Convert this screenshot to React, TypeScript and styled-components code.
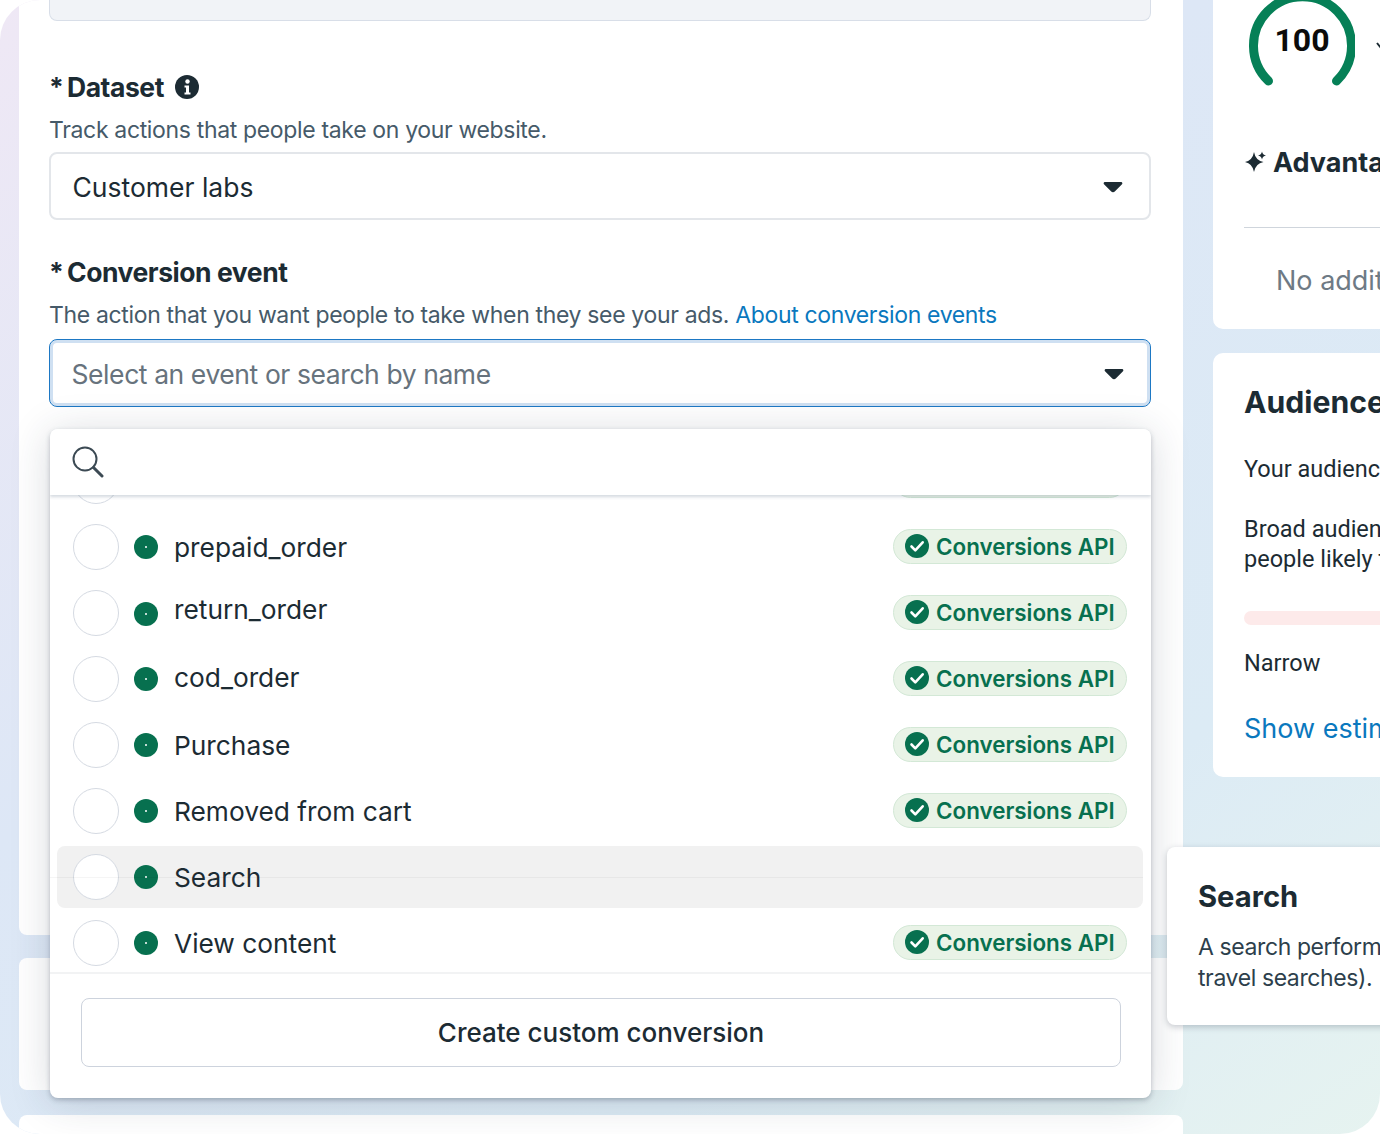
import React from 'react';
import styled, { createGlobalStyle } from 'styled-components';

const GlobalStyle = createGlobalStyle`
    html, body {
        margin: 0;
        padding: 0;
        background: #ffffff;
    }
    body {
        font-family: Inter, "Noto Sans", "Liberation Sans", sans-serif;
        color: #1c2b33;
    }
`;

const Frame = styled.div`
    position: relative;
    display: flex;
    gap: 30px;
    width: 1380px;
    height: 1134px;
    padding-left: 19px;
    box-sizing: border-box;
    overflow: hidden;
    border-radius: 40px 0 40px 40px;
    background: linear-gradient(145deg, #efe8f5 0%, #dde7f6 40%, #dcebf5 75%, #e6f3f0 100%);
`;

const LeftColumn = styled.div`
    flex: 0 0 1164px;
    display: flex;
    flex-direction: column;
`;

const RightColumn = styled.div`
    flex: 1;
    display: flex;
    flex-direction: column;
    gap: 24px;
    min-width: 0;
`;

const Panel = styled.section<{ $height: number; $gap?: number }>`
    flex: 0 0 ${(p) => p.$height}px;
    margin-bottom: ${(p) => p.$gap || 0}px;
    box-sizing: border-box;
    background: #ffffff;
    border-radius: 0 0 8px 8px;
    padding: 0 30px;
`;

const BottomPanel = styled(Panel)`
    border-radius: 8px;
`;

const TopField = styled.div`
    width: 1102px;
    height: 21px;
    box-sizing: border-box;
    background: #f1f3f7;
    border: 1.5px solid #d8dee8;
    border-top: 0;
    border-radius: 0 0 8px 8px;
`;

const FieldLabel = styled.h3<{ $top: number }>`
    display: flex;
    align-items: center;
    margin: ${(p) => p.$top}px 0 0;
    height: 36px;
    font-size: 26.5px;
    font-weight: 700;
    letter-spacing: -0.45px;
    color: #1c2b33;
`;

const Asterisk = styled.span`
    flex: 0 0 18px;
`;

const LabelIcon = styled.span`
    display: flex;
    margin-left: 11px;
`;

const Hint = styled.p<{ $after: number }>`
    margin: 10px 0 ${(p) => p.$after}px;
    height: 30px;
    line-height: 30px;
    font-size: 23px;
    letter-spacing: -0.34px;
    color: #465a69;
    white-space: nowrap;
`;

const BlueLink = styled.a`
    color: #0a78be;
`;

const Select = styled.div<{ $focused?: boolean }>`
    display: flex;
    align-items: center;
    justify-content: space-between;
    width: 1102px;
    height: 68px;
    box-sizing: border-box;
    padding: 2px 26px 0 21.500px;
    border-radius: 8px;
    font-size: 26.5px;
    letter-spacing: ${(p) => (p.$focused ? '-0.42px' : '0')};
    background: #ffffff;
    border: ${(p) => (p.$focused ? '1.5px solid #1d78c4' : '2px solid #e3e6ea')};
    box-shadow: ${(p) => (p.$focused ? 'inset 0 0 0 3px #cfe0f2' : 'none')};
    color: ${(p) => (p.$focused ? '#67737d' : '#1c2b33')};
`;

const Dropdown = styled.div`
    position: absolute;
    left: 50px;
    top: 429px;
    width: 1101px;
    height: 669px;
    display: flex;
    flex-direction: column;
    background: #ffffff;
    border-radius: 8px;
    overflow: hidden;
    box-shadow: 0 2px 5px rgba(40, 50, 70, 0.28);
`;

const DropdownGlow = styled.div`
    position: absolute;
    left: 50px;
    top: 429px;
    width: 1101px;
    height: 669px;
    border-radius: 8px;
    box-shadow: 0 4px 40px rgba(40, 50, 70, 0.18);
`;

const SearchBar = styled.div`
    position: relative;
    z-index: 1;
    flex: 0 0 66px;
    display: flex;
    align-items: center;
    padding-left: 22px;
    background: #ffffff;
    box-shadow: 0 2px 3px rgba(60, 80, 110, 0.22);
`;

const List = styled.div`
    flex: 1;
    overflow: hidden;
`;

const ListInner = styled.div`
    margin-top: -47px;
`;

const Row = styled.div<{ $hovered?: boolean }>`
    position: relative;
    display: flex;
    align-items: center;
    height: ${(p) => (p.$hovered ? 62 : 66)}px;
    margin: ${(p) => (p.$hovered ? '2px 8px 2px 7px' : '0 8px 0 7px')};
    padding: 0 16px;
    border-radius: 8px;
    background: ${(p) => (p.$hovered ? '#f1f1f1' : 'transparent')};
    &::after {
        content: '';
        display: ${(p) => (p.$hovered ? 'block' : 'none')};
        position: absolute;
        left: -7px;
        right: 0;
        top: 31px;
        height: 1px;
        background: rgba(0, 0, 0, 0.04);
    }
`;

const Radio = styled.span`
    flex: 0 0 46px;
    height: 46px;
    box-sizing: border-box;
    border: 1.5px solid #d5dae2;
    border-radius: 50%;
    background: #ffffff;
`;

const StatusDot = styled.span<{ $down?: number }>`
    position: relative;
    flex: 0 0 24px;
    height: 24px;
    margin: ${(p) => (p.$down || 0) * 2}px 16px 0 15px;
    border-radius: 50%;
    background: #07704f;
    &::after {
        content: '';
        position: absolute;
        left: 11px;
        top: 11px;
        width: 2px;
        height: 2px;
        border-radius: 50%;
        background: #ffffff;
    }
`;

const EventName = styled.span<{ $up?: number }>`
    flex: 1;
    margin-bottom: ${(p) => (p.$up || 0) * 2}px;
    font-size: 26.3px;
    color: #1c2b33;
`;

const Badge = styled.span`
    display: flex;
    align-items: center;
    gap: 7px;
    width: 234px;
    height: 35px;
    margin-bottom: 2px;
    box-sizing: border-box;
    padding-left: 11px;
    border: 1.5px solid #d3e8d6;
    border-radius: 18px;
    background: #e9f3e7;
    color: #07704f;
    font-size: 22.4px;
    font-weight: 600;
    white-space: nowrap;
`;

const Footer = styled.div`
    flex: 0 0 126px;
    box-sizing: border-box;
    padding: 24px 30px 0 31px;
    border-top: 2px solid #f2f3f4;
`;

const FooterButton = styled.div`
    display: flex;
    align-items: center;
    justify-content: center;
    height: 69px;
    box-sizing: border-box;
    border: 1.5px solid #cdd3dd;
    border-radius: 8px;
    font-size: 26px;
    font-weight: 500;
    color: #1c2b33;
`;

const SideCard = styled.section<{ $height: number; $rounded?: boolean }>`
    flex: 0 0 ${(p) => p.$height}px;
    box-sizing: border-box;
    background: #ffffff;
    border-radius: ${(p) => (p.$rounded ? '10px 0 0 10px' : '0 0 0 10px')};
    padding-left: 31px;
    overflow: hidden;
    white-space: nowrap;
`;

const GaugeRow = styled.div`
    display: flex;
    height: 132px;
    margin-left: 5px;
`;

const GaugeWrap = styled.div`
    position: relative;
    width: 106px;
    height: 90px;
    flex: none;
`;

const GaugeValue = styled.span`
    position: absolute;
    left: 0;
    right: 0;
    top: 21px;
    text-align: center;
    font-family: Roboto, "Liberation Sans", sans-serif;
    font-size: 32px;
    font-weight: 700;
    color: #0b0b0b;
`;

const Chevron = styled.svg`
    flex: none;
    margin: 41px 0 0 21px;
`;

const AdvantageTitle = styled.h3`
    display: flex;
    align-items: center;
    gap: 6px;
    margin: 0 0 0 1px;
    height: 60px;
    font-size: 27px;
    font-weight: 700;
    color: #1c2b33;
    svg {
        flex: none;
    }
`;

const Divider = styled.hr`
    margin: 35px 0 0;
    border: 0;
    border-top: 1.5px solid #cfd5dc;
`;

const MutedLine = styled.p`
    margin: 35px 0 0 32px;
    font-size: 27px;
    line-height: 36px;
    color: #6e7a85;
`;

const AudienceTitle = styled.h2`
    margin: 29px 0 0;
    height: 40px;
    line-height: 40px;
    font-size: 30.2px;
    font-weight: 700;
    color: #1c2b33;
`;

const BodyText = styled.p<{ $top: number }>`
    margin: ${(p) => p.$top}px 0 0;
    font-family: Roboto, "Liberation Sans", sans-serif;
    font-size: 23.5px;
    line-height: 30px;
    color: #1c2b33;
`;

const MeterBar = styled.div`
    height: 14px;
    margin-top: 37px;
    background: #fdeaea;
    border-radius: 7px 0 0 7px;
`;

const ShowLink = styled.a`
    display: block;
    margin-top: 33px;
    font-size: 27px;
    line-height: 36px;
    color: #0a78be;
`;

const Tooltip = styled.div`
    position: absolute;
    left: 1167px;
    top: 847px;
    width: 300px;
    height: 178px;
    box-sizing: border-box;
    padding: 31px 0 0 31px;
    background: #ffffff;
    border-radius: 8px;
    box-shadow: 0 2px 6px rgba(40, 50, 70, 0.25);
    white-space: nowrap;
`;

const TooltipTitle = styled.h4`
    margin: 0 0 16px;
    font-size: 29.2px;
    line-height: 38px;
    font-weight: 700;
    color: #1c2b33;
`;

const TooltipText = styled.p`
    margin: 0;
    font-size: 23px;
    letter-spacing: -0.4px;
    line-height: 31px;
    color: #2d3f4c;
`;

const Caret = () => (
    <svg width="20" height="12" viewBox="0 0 20 12">
        <path
            d="M2 1h16c1.2 0 1.8 1.3 1 2.2l-7 7a2.6 2.6 0 0 1-4 0l-7-7C.2 2.3.8 1 2 1z"
            fill="#1c2b33"
        />
    </svg>
);

const InfoIcon = () => (
    <svg width="24" height="24" viewBox="0 0 24 24">
        <circle cx="12" cy="12" r="12" fill="#1c2b33" />
        <circle cx="12.5" cy="6.5" r="2.2" fill="#fff" />
        <path d="M9.5 10.5h4.5v7h1.5v2h-6v-2H11v-5H9.5z" fill="#fff" />
    </svg>
);

const SearchIcon = () => (
    <svg width="32" height="32" viewBox="0 0 32 32" fill="none" stroke="#3c4a54">
        <circle cx="13" cy="13" r="11.5" strokeWidth="2" />
        <path d="M21.5 21.5L30 30" strokeWidth="3" strokeLinecap="round" />
    </svg>
);

const CheckIcon = () => (
    <svg width="24" height="24" viewBox="0 0 24 24" style={{ flex: 'none' }}>
        <circle cx="12" cy="12" r="12" fill="#07704f" />
        <path
            d="M6.5 12.5l3.8 3.8 7.4-8"
            fill="none"
            stroke="#fff"
            strokeWidth="2.6"
            strokeLinecap="round"
            strokeLinejoin="round"
        />
    </svg>
);

const SparkleIcon = () => (
    <svg width="22" height="22" viewBox="0 0 22 22" fill="#1c2b33">
        <path d="M9 1Q10.500 9.500 18.500 11 10.500 12.500 9 21 7.500 12.500 0 11 7.500 9.500 9 1z" />
        <path d="M17 0.500Q17.600 3.900 21 4.500 17.600 5.100 17 8.500 16.400 5.100 13 4.500 16.400 3.900 17 0.500z" />
    </svg>
);

const Gauge = () => (
    <GaugeWrap>
        <svg width="106" height="90" viewBox="0 0 106 90" fill="none">
            <path
                d="M19.500 81A49 49 0 1 1 87.500 81"
                stroke="#068057"
                strokeWidth="9"
                strokeLinecap="round"
            />
        </svg>
        <GaugeValue>100</GaugeValue>
    </GaugeWrap>
);

interface EventRow {
    name: string;
    api: boolean;
    up?: number;
    down?: number;
    hovered?: boolean;
}

const events: EventRow[] = [
    { name: '', api: true },
    { name: 'prepaid_order', api: true },
    { name: 'return_order', api: true, up: 3.5, down: 1 },
    { name: 'cod_order', api: true, up: 1.5 },
    { name: 'Purchase', api: true },
    { name: 'Removed from cart', api: true },
    { name: 'Search', api: false, hovered: true },
    { name: 'View content', api: true },
];

const App: React.FC = () => (
    <>
        <GlobalStyle />
        <Frame>
            <LeftColumn>
                <Panel $height={935} $gap={23}>
                    <TopField />
                    <FieldLabel $top={48}>
                        <Asterisk>*</Asterisk>
                        Dataset
                        <LabelIcon>
                            <InfoIcon />
                        </LabelIcon>
                    </FieldLabel>
                    <Hint $after={7}>Track actions that people take on your website.</Hint>
                    <Select>
                        Customer labs
                        <Caret />
                    </Select>
                    <FieldLabel $top={34}>
                        <Asterisk>*</Asterisk>
                        Conversion event
                    </FieldLabel>
                    <Hint $after={9}>
                        The action that you want people to take when they see your ads.{' '}
                        <BlueLink>About conversion events</BlueLink>
                    </Hint>
                    <Select $focused>
                        Select an event or search by name
                        <Caret />
                    </Select>
                </Panel>
                <BottomPanel $height={132} $gap={25} />
                <BottomPanel $height={60} />
            </LeftColumn>

            <RightColumn>
                <SideCard $height={329}>
                    <GaugeRow>
                        <Gauge />
                        <Chevron width="10" height="10" viewBox="0 0 10 10">
                            <path d="M1 2l4 5 4-5" fill="none" stroke="#1c2b33" strokeWidth="2" />
                        </Chevron>
                    </GaugeRow>
                    <AdvantageTitle>
                        <SparkleIcon />
                        Advantage+
                    </AdvantageTitle>
                    <Divider />
                    <MutedLine>No additional</MutedLine>
                </SideCard>
                <SideCard $height={424} $rounded>
                    <AudienceTitle>Audience</AudienceTitle>
                    <BodyText $top={32}>Your audience</BodyText>
                    <BodyText $top={30}>
                        Broad audience
                        <br />
                        people likely to
                    </BodyText>
                    <MeterBar />
                    <BodyText $top={23}>Narrow</BodyText>
                    <ShowLink>Show estimated</ShowLink>
                </SideCard>
            </RightColumn>

            <DropdownGlow />
            <Dropdown>
                <SearchBar>
                    <SearchIcon />
                </SearchBar>
                <List>
                    <ListInner>
                        {events.map((e, i) => (
                            <Row key={i} $hovered={e.hovered}>
                                <Radio />
                                <StatusDot $down={e.down} />
                                <EventName $up={e.up}>{e.name}</EventName>
                                {e.api && (
                                    <Badge>
                                        <CheckIcon />
                                        Conversions API
                                    </Badge>
                                )}
                            </Row>
                        ))}
                    </ListInner>
                </List>
                <Footer>
                    <FooterButton>Create custom conversion</FooterButton>
                </Footer>
            </Dropdown>

            <Tooltip>
                <TooltipTitle>Search</TooltipTitle>
                <TooltipText>
                    A search performed
                    <br />
                    travel searches).
                </TooltipText>
            </Tooltip>
        </Frame>
    </>
);

export default App;
